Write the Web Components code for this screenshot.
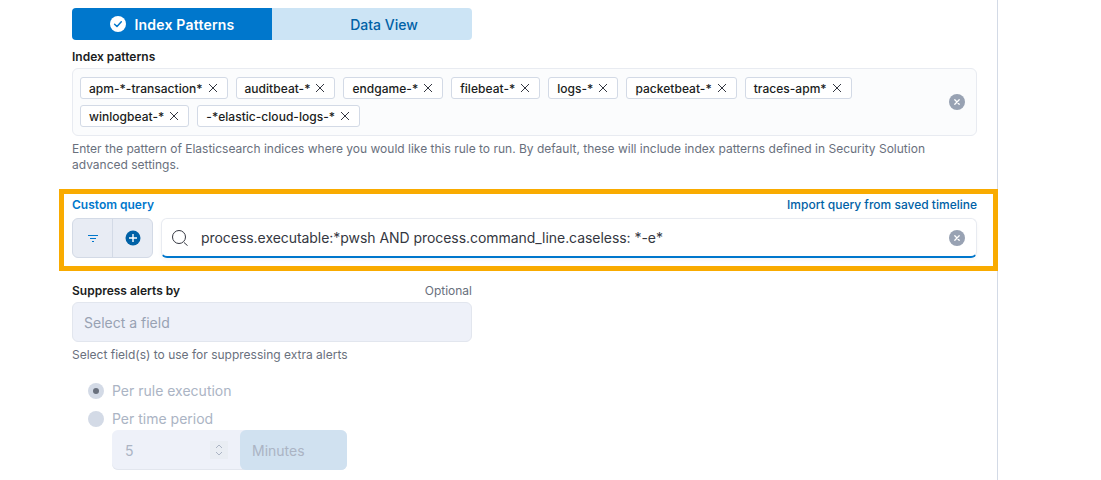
<!DOCTYPE html>
<html>
<head>
<meta charset="utf-8">
<style>
  html, body { margin: 0; background: #fff; height: 480px; overflow: hidden; }
  body { font-family: Inter, "Liberation Sans", sans-serif; color: #343741; }
</style>
</head>
<body>
<rule-panel>
  <source-toggle></source-toggle>
  <form-row label="Index patterns" style="margin-top:9px">
    <pattern-combo>
      <pattern-tag>apm-*-transaction*</pattern-tag>
      <pattern-tag>auditbeat-*</pattern-tag>
      <pattern-tag>endgame-*</pattern-tag>
      <pattern-tag>filebeat-*</pattern-tag>
      <pattern-tag>logs-*</pattern-tag>
      <pattern-tag>packetbeat-*</pattern-tag>
      <pattern-tag>traces-apm*</pattern-tag>
      <pattern-tag>winlogbeat-*</pattern-tag>
      <pattern-tag>-*elastic-cloud-logs-*</pattern-tag>
    </pattern-combo>
    <span slot="help">Enter the pattern of Elasticsearch indices where you would like this rule to run. By default, these will include index patterns defined in Security Solution advanced settings.</span>
  </form-row>
  <query-box></query-box>
  <suppress-field></suppress-field>
  <suppress-period></suppress-period>
</rule-panel>

<script>
// shared clear button (grey circle with x)
const clearIcon = `<svg width="16" height="16" viewBox="0 0 16 16"><circle cx="8" cy="8" r="8" fill="#98a2b3"/><path d="M5.8 5.8l4.4 4.4M10.2 5.8l-4.4 4.4" stroke="#fff" stroke-width="1.3" stroke-linecap="round"/></svg>`;

// --- RulePanel ---
class RulePanel extends HTMLElement {
  constructor() {
    super();
    this.attachShadow({ mode: 'open' });
    this.shadowRoot.innerHTML = `
      <style>
        :host { display: block; box-sizing: border-box; width: 998px; height: 480px; padding: 8px 20px 0 72px; border-right: 1px solid #d3dae6; }
      </style>
      <slot></slot>`;
  }
}
customElements.define('rule-panel', RulePanel);

// --- SourceToggle ---
class SourceToggle extends HTMLElement {
  constructor() {
    super();
    this.attachShadow({ mode: 'open' });
    this.shadowRoot.innerHTML = `
      <style>
        :host { display: flex; width: 400px; height: 32px; font-size: 14px; font-weight: 500; }
        .btn { flex: 0 0 200px; box-sizing: border-box; display: flex; align-items: center; justify-content: center; gap: 9px; }
        .on { background: #0077cc; color: #fff; border-radius: 4px 0 0 4px; font-weight: 600; letter-spacing: .2px; }
        .off { background: #cce4f5; color: #0061a6; border-radius: 0 4px 4px 0; padding-left: 24px; }
        svg { display: block; }
      </style>
      <div class="btn on">
        <svg width="16" height="16" viewBox="0 0 16 16"><circle cx="8" cy="8" r="8" fill="#fff"/><path d="M4.6 8.2l2.4 2.3 4.3-4.7" fill="none" stroke="#0077cc" stroke-width="1.5" stroke-linecap="round" stroke-linejoin="round"/></svg>
        <span>Index Patterns</span>
      </div>
      <div class="btn off">Data View</div>`;
  }
}
customElements.define('source-toggle', SourceToggle);

// --- FormRow ---
class FormRow extends HTMLElement {
  constructor() {
    super();
    this.attachShadow({ mode: 'open' });
    this.shadowRoot.innerHTML = `
      <style>
        :host { display: block; }
        .label { font-size: 12px; line-height: 16px; font-weight: 600; color: #1a1c21; margin-bottom: 3px; }
        .help { font-size: 12px; line-height: 16px; color: #69707d; margin-top: 5px; }
      </style>
      <div class="label"></div>
      <slot></slot>
      <div class="help"><slot name="help"></slot></div>`;
  }
  connectedCallback() {
    this.shadowRoot.querySelector('.label').textContent = this.getAttribute('label');
  }
}
customElements.define('form-row', FormRow);

// --- PatternCombo ---
class PatternCombo extends HTMLElement {
  constructor() {
    super();
    this.attachShadow({ mode: 'open' });
    this.shadowRoot.innerHTML = `
      <style>
        :host { display: flex; align-items: center; box-sizing: border-box; height: 68px; background: #fbfcfd; border: 1px solid #e8ebf1; border-radius: 6px; padding: 8px 11px 8px 7px; }
        .tags { flex: 1; display: flex; flex-wrap: wrap; gap: 6px 8px; align-content: flex-start; align-self: flex-start; }
        svg { display: block; flex: none; }
      </style>
      <div class="tags"><slot></slot></div>
      ${clearIcon}`;
  }
}
customElements.define('pattern-combo', PatternCombo);

// --- PatternTag ---
class PatternTag extends HTMLElement {
  constructor() {
    super();
    this.attachShadow({ mode: 'open' });
    this.shadowRoot.innerHTML = `
      <style>
        :host { display: inline-flex; align-items: center; gap: 5px; box-sizing: border-box; height: 22px; padding: 0 9px 0 8px; background: #fff; border: 1px solid #d3dae6; border-radius: 3px; font-size: 12px; font-weight: 500; letter-spacing: .03px; color: #1a1c21; white-space: nowrap; }
        svg { display: block; }
      </style>
      <slot></slot>
      <svg width="10" height="10" viewBox="0 0 10 10"><path d="M1 1l8 8M9 1l-8 8" stroke="#343741" stroke-width="1"/></svg>`;
  }
}
customElements.define('pattern-tag', PatternTag);

// --- QueryBox (orange highlight around the custom query) ---
class QueryBox extends HTMLElement {
  constructor() {
    super();
    this.attachShadow({ mode: 'open' });
    this.shadowRoot.innerHTML = `
      <style>
        :host { display: block; box-sizing: border-box; height: 82px; margin: 16px -21px 0 -13px; border: 5px solid #f9ab00; padding: 3px 16px 0 8px; }
        .top { display: flex; justify-content: space-between; font-size: 12px; line-height: 16px; margin-bottom: 5px; }
        .label { font-weight: 600; color: #0077cc; }
        .link { font-weight: 500; color: #0061a6; }
        .row { display: flex; gap: 8px; height: 40px; }
        .filters { display: flex; width: 81px; flex: none; box-sizing: border-box; background: #e8ecf4; border: 1px solid #d3dae6; border-radius: 6px; }
        .filters div { display: flex; align-items: center; justify-content: center; }
        .filters .f { width: 39px; }
        .filters .p { flex: 1; border-left: 1px solid #d3dae6; }
        .input { flex: 1; display: flex; align-items: center; box-sizing: border-box; background: #fff; border: 1px solid #e8ebf1; border-bottom: 2px solid #0077cc; border-radius: 6px; padding: 0 11px 0 10px; font-size: 14px; letter-spacing: -.05px; color: #343741; box-shadow: 0 2px 4px rgba(0,0,0,.04); }
        .text { flex: 1; margin-left: 13px; white-space: nowrap; }
        svg { display: block; flex: none; }
      </style>
      <div class="top"><span class="label">Custom query</span><span class="link">Import query from saved timeline</span></div>
      <div class="row">
        <div class="filters">
          <div class="f"><svg width="10" height="7" viewBox="0 0 10 7"><path d="M0 .5h10M2 3.5h6M4 6.5h2" stroke="#0077cc" stroke-width="1"/></svg></div>
          <div class="p"><svg width="16" height="16" viewBox="0 0 16 16"><circle cx="8" cy="8" r="7.5" fill="#0061a6"/><path d="M8 4v8M4 8h8" stroke="#fff" stroke-width="1.4"/></svg></div>
        </div>
        <div class="input">
          <svg width="16" height="16" viewBox="0 0 16 16"><circle cx="7" cy="7" r="6.5" fill="none" stroke="#343741" stroke-width="1"/><path d="M12 12.5l3.6 3.2" stroke="#343741" stroke-width="1"/></svg>
          <span class="text">process.executable:*pwsh AND process.command_line.caseless: *-e*</span>
          ${clearIcon}
        </div>
      </div>`;
  }
}
customElements.define('query-box', QueryBox);

// --- SuppressField ---
class SuppressField extends HTMLElement {
  constructor() {
    super();
    this.attachShadow({ mode: 'open' });
    this.shadowRoot.innerHTML = `
      <style>
        :host { display: block; width: 400px; margin-top: 12px; }
        .top { display: flex; justify-content: space-between; font-size: 12px; line-height: 16px; margin-bottom: 3px; }
        .label { font-weight: 600; color: #1a1c21; }
        .opt { color: #69707d; }
        .input { box-sizing: border-box; height: 40px; display: flex; align-items: center; padding: 0 11px; background: #eef1f9; border: 1px solid #e2e6ee; border-radius: 6px; font-size: 14px; color: #98a2b3; }
        .help { font-size: 12px; line-height: 16px; color: #69707d; margin-top: 5px; }
      </style>
      <div class="top"><span class="label">Suppress alerts by</span><span class="opt">Optional</span></div>
      <div class="input">Select a field</div>
      <div class="help">Select field(s) to use for suppressing extra alerts</div>`;
  }
}
customElements.define('suppress-field', SuppressField);

// --- SuppressPeriod (disabled radios + duration) ---
class SuppressPeriod extends HTMLElement {
  constructor() {
    super();
    this.attachShadow({ mode: 'open' });
    this.shadowRoot.innerHTML = `
      <style>
        :host { display: block; margin: 20px 0 0 16px; font-size: 14px; color: #abb4c4; }
        .radio { display: flex; align-items: center; gap: 8px; height: 16px; line-height: 16px; margin-bottom: 12px; }
        .dot { width: 16px; height: 16px; border-radius: 50%; background: #d3dae6; display: flex; align-items: center; justify-content: center; }
        .dot i { width: 6px; height: 6px; border-radius: 50%; background: #69707d; }
        .group { display: flex; width: 235px; height: 40px; box-sizing: border-box; margin: -9px 0 0 24px; background: #eef1f9; border-radius: 6px; box-shadow: inset 0 -1px 0 #e2e6ee; overflow: hidden; }
        .num { flex: 1; display: flex; align-items: center; justify-content: space-between; padding: 0 12px 0 13px; }
        .spin { width: 18px; height: 18px; background: #e9edf3; display: flex; align-items: center; justify-content: center; }
        .unit { width: 107px; display: flex; align-items: center; padding-left: 12px; box-sizing: border-box; background: #d0e1f0; border-radius: 6px 0 0 6px; }
        svg { display: block; }
      </style>
      <div class="radio"><span class="dot"><i></i></span>Per rule execution</div>
      <div class="radio"><span class="dot"></span>Per time period</div>
      <div class="group">
        <div class="num">5
          <span class="spin"><svg width="10" height="14" viewBox="0 0 10 14"><path d="M2 5l3-3 3 3M2 9l3 3 3-3" fill="none" stroke="#abb4c4" stroke-width="1"/></svg></span>
        </div>
        <div class="unit">Minutes</div>
      </div>`;
  }
}
customElements.define('suppress-period', SuppressPeriod);
</script>
</body>
</html>
